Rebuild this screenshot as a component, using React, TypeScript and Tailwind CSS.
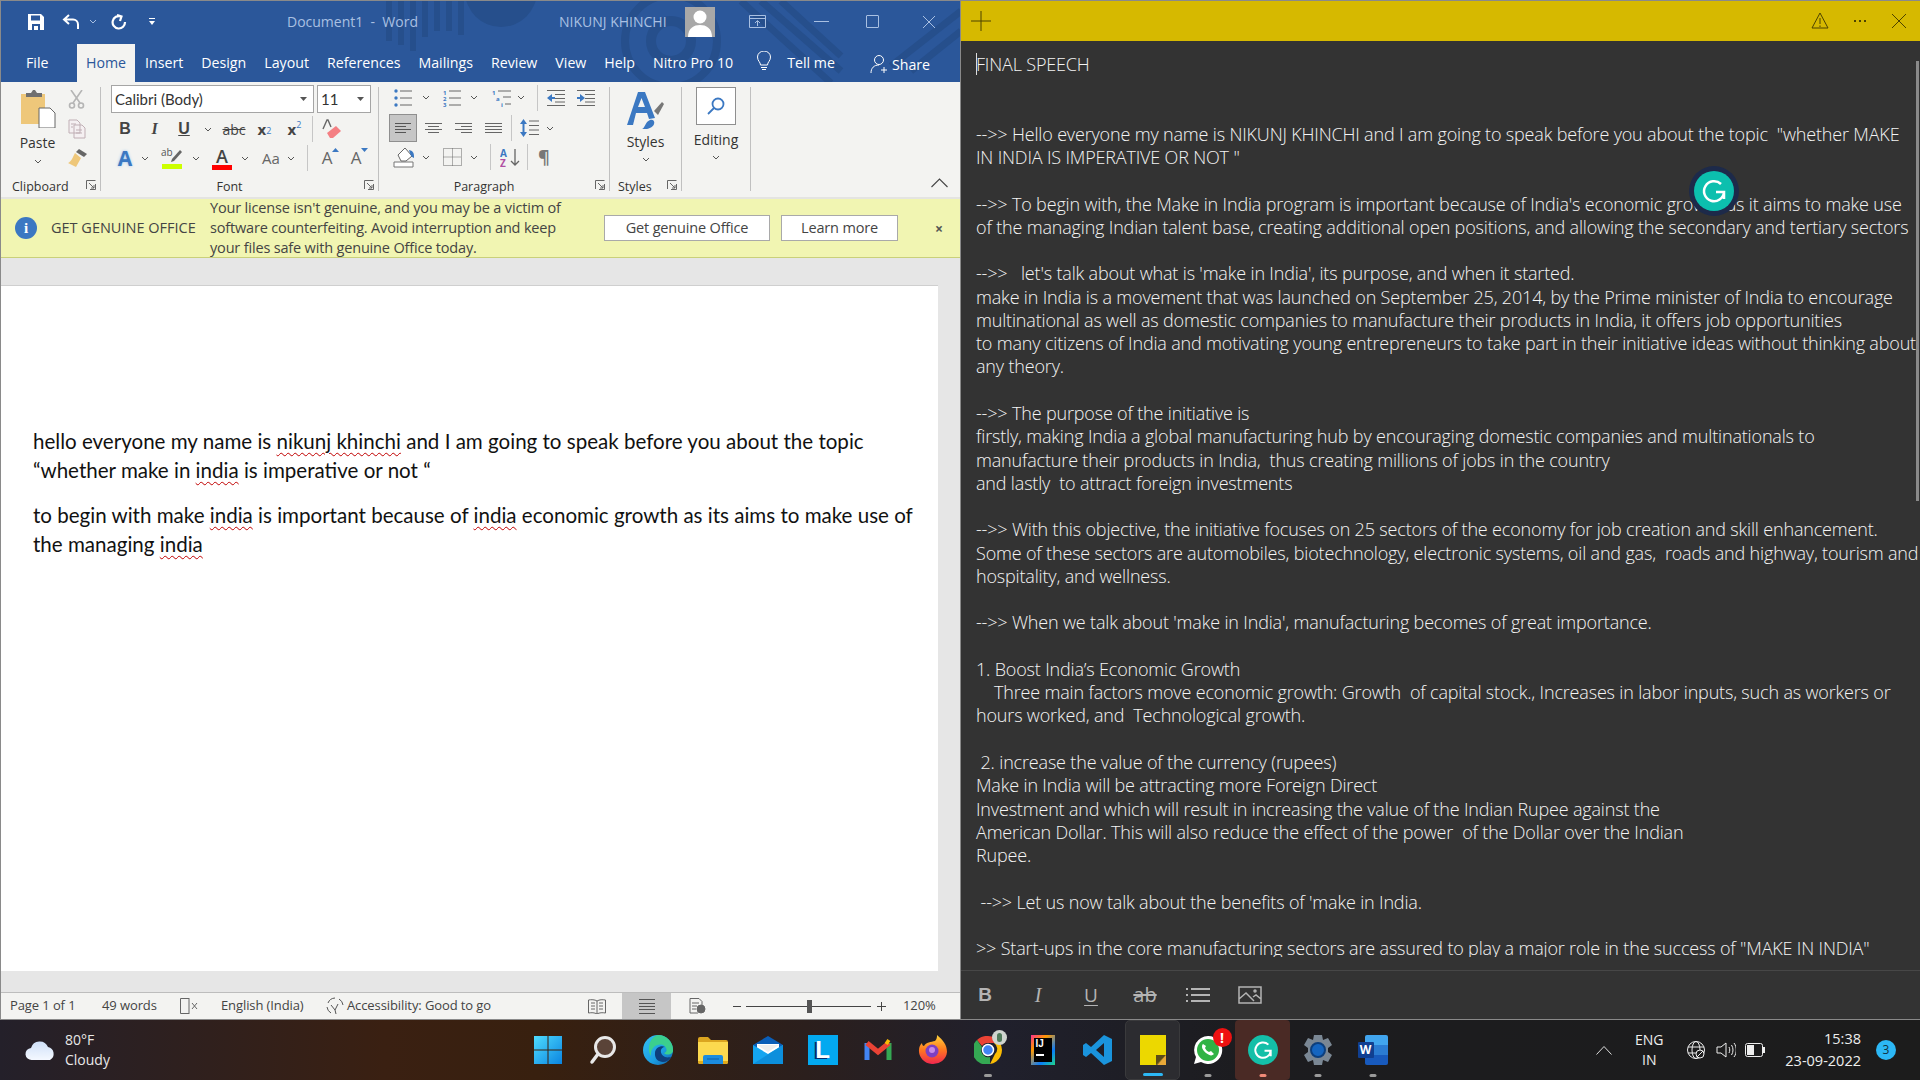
import React from "react";

const Chev = ({ c = "#555" }: { c?: string }) => (
  <svg width="8" height="5" viewBox="0 0 8 5"><path d="M1 1l3 3 3-3" fill="none" stroke={c} strokeWidth="1" /></svg>
);
const Launcher = () => (
  <svg width="10" height="10" viewBox="0 0 10 10" fill="none" stroke="#666"><path d="M.5 9V.5H9.5M9.5 4v5.5H4M3 3l5 5M8 5v3H5" /></svg>
);
const Sep = ({ className = "" }: { className?: string }) => <div className={"w-px h-[26px] bg-[#c6c6c6] " + className} />;
const Cell = ({ className = "", children }: { className?: string; children?: React.ReactNode }) => (
  <div className={"flex items-center justify-center shrink-0 " + className}>{children}</div>
);
const Lines = ({ rows, w = 18, h = 16, c = "#666" }: { rows: [number, number, number][]; w?: number; h?: number; c?: string }) => (
  <svg width={w} height={h} viewBox={`0 0 ${w} ${h}`} stroke={c} strokeWidth="1">
    {rows.map((r, i) => <line key={i} x1={r[0]} x2={r[1]} y1={r[2] + 0.5} y2={r[2] + 0.5} />)}
  </svg>
);
const Group = ({ className, label, launcher, children, labelClass = "" }: { className: string; label: string; launcher?: boolean; children: React.ReactNode; labelClass?: string }) => (
  <div className={"relative h-full shrink-0 flex flex-col " + className}>
    <div className="h-[91px] shrink-0">{children}</div>
    <div className={"flex-1 flex items-center justify-center text-[12.5px] text-[#333] pt-[4px] " + labelClass}>{label}</div>
    {launcher && <div className="absolute right-[4px] bottom-[7px]"><Launcher /></div>}
  </div>
);
const Divider = () => <div className="w-px h-[104px] bg-[#c0c0c0] shrink-0 mt-[5px]" />;

const Tabs = ["Insert", "Design", "Layout", "References", "Mailings", "Review", "View", "Help", "Nitro Pro 10"];

function TitleBar() {
  return (
    <div className="relative h-[81px] bg-[#2b579a] shrink-0 overflow-hidden font-['Open_Sans',sans-serif]">
      <svg className="absolute left-[380px] top-0" width="580" height="82" viewBox="0 0 580 82" fill="none" stroke="#264f8c">
        <g strokeWidth="6"><path d="M8 0v40M20 0v44M32 0v50M44 0v36M56 0v30M68 0v30M80 0v34" /></g>
        <circle cx="290" cy="40" r="20" strokeWidth="10" />
        <circle cx="290" cy="40" r="46" strokeWidth="8" />
        <path d="M360 0l90 82M380 0l80 70M400 0l60 55" strokeWidth="7" />
        <path d="M580 10l-70 55M580 30l-50 40" strokeWidth="7" />
        <circle cx="120" cy="-10" r="36" fill="#264f8c" stroke="none" />
      </svg>
      <div className="relative flex items-center h-[41px] text-white">
        <svg className="ml-[27px]" width="16" height="16" viewBox="0 0 16 16"><path d="M0 0h13l3 3v13H0z" fill="#fff" /><path d="M3 1.5h9v5H3z" fill="#2b579a" /><path d="M4 10h8v6h-2v-4H6v4H4z" fill="#2b579a" /></svg>
        <svg className="ml-[18px]" width="18" height="16" viewBox="0 0 18 16" fill="none" stroke="#fff" strokeWidth="2"><path d="M7 1L2 5.5 7 10M2 5.5h9a5 5 0 0 1 5 5V15" /></svg>
        <div className="ml-[9px]"><Chev c="#a9c0e2" /></div>
        <svg className="ml-[14px]" width="16" height="16" viewBox="0 0 16 16" fill="none" stroke="#fff" strokeWidth="2.2"><path d="M10 2.5A6.2 6.2 0 1 0 14 8M6 1l4.5 1.5L9 7" /></svg>
        <svg className="ml-[22px]" width="6" height="7" viewBox="0 0 6 7" fill="#fff"><path d="M0 0h6v1H0zM0 3h6L3 7z" /></svg>
        <div className="ml-[132px] text-[14px] text-[#a9c0e2] whitespace-pre w-[272px]">Document1  -  Word</div>
        <div className="text-[14px] text-[#a9c0e2] w-[126px] whitespace-nowrap">NIKUNJ KHINCHI</div>
        <div className="w-[30px] h-[30px] bg-[#a8a8a8] overflow-hidden">
          <svg width="30" height="30" viewBox="0 0 30 30" fill="#fff"><circle cx="15" cy="10" r="6.5" /><path d="M3 30c0-9 6-12 12-12s12 3 12 12z" /></svg>
        </div>
        <svg className="ml-[34px]" width="17" height="13" viewBox="0 0 17 13" fill="none" stroke="#a9c0e2"><path d="M.5.5h16v12H.5zM.5 3.5h16M8.5 11V6M6 8l2.5-2.5L11 8" /></svg>
        <div className="ml-[48px] w-[15px] h-px bg-[#a9c0e2]" />
        <div className="ml-[37px] w-[13px] h-[13px] border border-[#a9c0e2] rounded-[1px]" />
        <svg className="ml-[43px]" width="14" height="14" viewBox="0 0 14 14" stroke="#a9c0e2"><path d="M1 1l12 12M13 1L1 13" /></svg>
      </div>
      <div className="relative flex items-end h-[40px] text-white text-[14.2px] leading-[38px]">
        <div className="ml-[25px] w-[23px]">File</div>
        <div className="ml-[28px] w-[58px] h-[38px] bg-[#f3f3f1] text-[#2b579a] text-center">Home</div>
        <div className="ml-[10px] flex gap-[18px] whitespace-nowrap">{Tabs.map(t => <span key={t}>{t}</span>)}</div>
        <svg className="ml-[23px] mb-[9px]" width="16" height="22" viewBox="0 0 16 22" fill="none" stroke="#fff"><path d="M4.5 14c0-3-3-4-3-8a6.5 6 0 0 1 13 0c0 4-3 5-3 8zM5 16.5h6M6 18.5h4" /></svg>
        <span className="ml-[15px]">Tell me</span>
        <svg className="ml-[35px] mb-[8px]" width="20" height="20" viewBox="0 0 20 20" fill="none" stroke="#fff"><circle cx="9" cy="6" r="4.5" /><path d="M1 19c0-5 3-8 8-8M14 13v6M11 16h6" /></svg>
        <span className="ml-[2px] relative top-[2px]">Share</span>
      </div>
    </div>
  );
}

function Ribbon() {
  const blue = "#3b78c2";
  return (
    <div className="relative h-[115px] bg-[#f3f3f1] shrink-0 flex font-['Open_Sans',sans-serif] text-[#444]">
      <Group className="w-[99px]" label="Clipboard" launcher labelClass="justify-start pl-[11px]">
        <div className="flex">
          <div className="w-[67px] flex flex-col items-center pt-[8px] pl-[6px]">
            <svg width="36" height="38" viewBox="0 0 36 38"><path d="M1 4h24v30H1z" fill="#eec77a" /><path d="M6 3h5l2-3h2l2 3h5v4H6z" fill="#707070" /><path d="M19 18h11l5 5v15H19z" fill="#fff" stroke="#666" /></svg>
            <div className="text-[14px] leading-[20px] mt-[5px] text-[#333]">Paste</div>
            <div className="mt-[6px] leading-none"><Chev /></div>
          </div>
          <div className="flex flex-col items-start">
            <svg className="mt-[8px]" width="17" height="19" viewBox="0 0 17 19" fill="none" stroke="#b5b5b5" strokeWidth="1.6"><path d="M3 0l9 13M14 0L5 13" /><circle cx="4" cy="15.5" r="2.5" /><circle cx="13" cy="15.5" r="2.5" /></svg>
            <svg className="mt-[10px]" width="18" height="20" viewBox="0 0 18 20" fill="#f5f0f2" stroke="#c0afb5"><path d="M1 1h8l3 3v10H1zM6 6h8l3 3v10H6zM3 5h5M3 8h2M8 11h6M8 14h6" /></svg>
            <svg className="mt-[10px]" width="19" height="18" viewBox="0 0 19 18"><path d="M11 0l8 5-3 3-8-5z" fill="#666" /><path d="M7 4l6 5-5 9-8-4c3-1 5-6 7-10z" fill="#eec77a" /></svg>
          </div>
        </div>
      </Group>
      <Divider />
      <Group className="w-[277px]" label="Font" launcher labelClass="pr-[20px]">
        <div className="pl-[10px] pt-[3px] flex flex-col">
          <div className="flex h-[28px] gap-[3px]">
            <div className="w-[203px] bg-white border border-[#a5a5a5] flex items-center justify-between px-[3px] pr-[6px] font-['Lato',sans-serif] text-[15px] text-[#333]">Calibri (Body)<svg width="7" height="4" viewBox="0 0 7 4" fill="#555"><path d="M0 0h7L3.5 4z" /></svg></div>
            <div className="w-[54px] bg-white border border-[#a5a5a5] flex items-center justify-between px-[3px] pr-[6px] font-['Lato',sans-serif] text-[15px] text-[#333]">11<svg width="7" height="4" viewBox="0 0 7 4" fill="#555"><path d="M0 0h7L3.5 4z" /></svg></div>
          </div>
          <div className="flex h-[26px] mt-[3px] items-center">
            <Cell className="w-[28px] font-bold text-[16px] font-['Liberation_Sans',sans-serif]">B</Cell>
            <Cell className="w-[31px] italic font-bold text-[16px] font-['Liberation_Serif',serif]">I</Cell>
            <Cell className="w-[28px] font-bold text-[16px] underline font-['Liberation_Sans',sans-serif]">U</Cell>
            <Cell className="w-[20px]"><Chev /></Cell>
            <Cell className="w-[32px] text-[14px] line-through">abc</Cell>
            <Cell className="w-[29px] font-bold text-[15px]">x<sub className="text-[9px] font-normal text-[#3b78c2]">2</sub></Cell>
            <Cell className="w-[31px] font-bold text-[15px]">x<sup className="text-[9px] font-normal text-[#3b78c2]">2</sup></Cell>
            <Sep className="ml-[2px]" />
            <Cell className="w-[38px]">
              <svg width="20" height="20" viewBox="0 0 20 20"><path d="M1 10L5 1h1l3 7" fill="none" stroke="#666" strokeWidth="1.4" /><path d="M5 14l9-7 5 5-8 7H8z" fill="#f47f83" /></svg>
            </Cell>
          </div>
          <div className="flex h-[26px] mt-[3px] items-center">
            <Cell className="w-[28px] text-[21px] font-bold text-[#3b78c2] leading-none [text-shadow:0_0_3px_#9cc3ee]">A</Cell>
            <Cell className="w-[12px]"><Chev /></Cell>
            <div className="ml-[8px] w-[26px] flex flex-col items-center">
              <svg width="22" height="17" viewBox="0 0 22 17"><path d="M11 12l8-9 2 2-8 9-3 1z" fill="#666" /><text x="0" y="9" fontSize="10" fill="#555" fontFamily="Open Sans">ab</text></svg>
              <div className="w-[20px] h-[5px] bg-[#ccff00]" />
            </div>
            <Cell className="ml-[5px] w-[12px]"><Chev /></Cell>
            <div className="ml-[7px] w-[26px] flex flex-col items-center leading-none">
              <span className="text-[18px] leading-[18px] font-semibold text-[#444]">A</span>
              <div className="w-[20px] h-[5px] bg-[#f00]" />
            </div>
            <Cell className="ml-[4px] w-[12px]"><Chev /></Cell>
            <Cell className="ml-[6px] w-[28px] text-[15px] text-[#666]">Aa</Cell>
            <Cell className="w-[12px]"><Chev /></Cell>
            <Sep className="ml-[10px]" />
            <Cell className="ml-[5px] w-[28px] text-[17px] text-[#666] relative">A<svg className="absolute right-[2px] top-[3px]" width="7" height="4" viewBox="0 0 7 4" fill={blue}><path d="M3.5 0L7 4H0z" /></svg></Cell>
            <Cell className="ml-px w-[28px] text-[17px] text-[#666] relative">A<svg className="absolute right-[2px] top-[3px]" width="7" height="4" viewBox="0 0 7 4" fill={blue}><path d="M0 0h7L3.5 4z" /></svg></Cell>
          </div>
        </div>
      </Group>
      <Divider />
      <Group className="w-[230px]" label="Paragraph" launcher labelClass="pr-[20px]">
        <div className="flex h-[29px] items-center pt-[2px]">
          <svg className="ml-[15px]" width="18" height="18" viewBox="0 0 18 18"><g fill={blue}><circle cx="2" cy="2" r="1.7" /><circle cx="2" cy="9" r="1.7" /><circle cx="2" cy="16" r="1.7" /></g><path d="M6 2h12M6 9h12M6 16h12" stroke="#666" /></svg>
          <Cell className="ml-[8px] w-[12px]"><Chev /></Cell>
          <svg className="ml-[11px]" width="18" height="18" viewBox="0 0 18 18"><text x="0" y="5.500" fontSize="6" fontWeight="700" fill={blue}>1</text><text x="0" y="11.5" fontSize="6" fontWeight="700" fill={blue}>2</text><text x="0" y="17.500" fontSize="6" fontWeight="700" fill={blue}>3</text><path d="M6 2h12M6 9h12M6 16h12" stroke="#666" /></svg>
          <Cell className="ml-[7px] w-[12px]"><Chev /></Cell>
          <svg className="ml-[12px]" width="19" height="18" viewBox="0 0 19 18"><text x="0" y="6" fontSize="6" fontWeight="700" fill={blue}>1</text><text x="4" y="12" fontSize="6" fontWeight="700" fill={blue}>a</text><text x="9" y="17.500" fontSize="6" fontWeight="700" fill={blue}>i</text><path d="M6 2h13M11 8h8M13 15h6" stroke="#666" /></svg>
          <Cell className="ml-[4px] w-[12px]"><Chev /></Cell>
          <Sep className="ml-[10px]" />
          <svg className="ml-[9px]" width="18" height="16" viewBox="0 0 18 16"><path d="M0 .5h18M8 4.5h10M8 8.5h10M8 12h10M0 15.5h18" stroke="#666" /><path d="M0 8l5-4v3h3v2H5v3z" fill={blue} /></svg>
          <svg className="ml-[12px]" width="18" height="16" viewBox="0 0 18 16"><path d="M0 .5h18M8 4.5h10M8 8.5h10M8 12h10M0 15.5h18" stroke="#666" /><path d="M8 8L3 4v3H0v2h3v3z" fill={blue} /></svg>
        </div>
        <div className="flex h-[28px] mt-[3px] items-center">
          <Cell className="ml-[10px] w-[28px] h-[28px] bg-[#c6c6c6] border border-[#8f8f8f]"><Lines w={16} h={13} rows={[[0, 16, 1], [0, 11, 4], [0, 16, 7], [0, 11, 10]]} c="#555" /></Cell>
          <Cell className="ml-[7px] w-[18px]"><Lines w={17} h={13} rows={[[0, 17, 1], [3, 14, 4], [0, 17, 7], [3, 14, 10]]} /></Cell>
          <Cell className="ml-[12px] w-[18px]"><Lines w={17} h={13} rows={[[0, 17, 1], [6, 17, 4], [0, 17, 7], [6, 17, 10]]} /></Cell>
          <Cell className="ml-[12px] w-[18px]"><Lines w={17} h={13} rows={[[0, 17, 1], [0, 17, 4], [0, 17, 7], [0, 17, 10]]} /></Cell>
          <Sep className="ml-[9px]" />
          <svg className="ml-[8px]" width="19" height="20" viewBox="0 0 19 20"><path d="M3.5 1L7 6H0zM3.5 19L0 14h7z" fill={blue} /><path d="M2.5 5h2v10h-2z" fill={blue} /><path d="M9 3h10M9 7.500h10M9 12h10M9 16.500h10" stroke="#666" /></svg>
          <Cell className="ml-[5px] w-[12px]"><Chev /></Cell>
        </div>
        <div className="flex h-[28px] mt-px items-center">
          <svg className="ml-[14px]" width="26" height="21" viewBox="0 0 26 21"><path d="M1 15h19v5H1z" fill="#fff" stroke="#777" /><path d="M5 8l7-7 7 8-6 5H8z" fill="#fff" stroke="#666" /><path d="M16 3c5 1 5 4 5 8-3-1-4-4-5-8z" fill={blue} /></svg>
          <Cell className="ml-px w-[12px]"><Chev /></Cell>
          <svg className="ml-[11px]" width="19" height="18" viewBox="0 0 19 18" fill="none" stroke="#666" strokeDasharray="1 1"><path d="M.5.5h18v17H.5zM9.500.5v17M.5 9h18" /></svg>
          <Cell className="ml-[6px] w-[12px]"><Chev /></Cell>
          <Sep className="ml-[10px]" />
          <svg className="ml-[9px]" width="20" height="21" viewBox="0 0 20 21"><text x="0" y="10" fontSize="10" fontWeight="700" fill={blue}>A</text><text x="0" y="20" fontSize="10" fontWeight="700" fill="#b04fa3">Z</text><path d="M15 2v16M11 14l4 4 4-4" fill="none" stroke="#666" strokeWidth="1.3" /></svg>
          <Sep className="ml-[7px]" />
          <Cell className="ml-[9px] w-[14px] text-[18px] text-[#777] font-bold">¶</Cell>
        </div>
      </Group>
      <Divider />
      <Group className="w-[71px]" label="Styles" launcher labelClass="justify-start pl-[8px]">
        <div className="flex flex-col items-center pt-[9px]">
          <svg width="38" height="38" viewBox="0 0 38 38"><path d="M0 34L11 1h7l10 26-6 1-2-6H9l-3 12zM11 16h7l-3.500-9z" fill={blue} fillRule="evenodd" /><path d="M27 20l8-9 2 2-6 11z" fill="#777" /><path d="M15 38c3-1 3-7 8-9 3-1 5 1 4 4-1 4-8 6-12 5z" fill={blue} /></svg>
          <div className="text-[14px] leading-[20px] mt-[3px] text-[#333]">Styles</div>
          <div className="leading-none mt-[5px]"><Chev /></div>
        </div>
      </Group>
      <Divider />
      <Group className="w-[68px]" label="">
        <div className="flex flex-col items-center pt-[5px]">
          <div className="w-[40px] h-[38px] bg-white border border-[#8f8f8f] flex items-center justify-center">
            <svg width="18" height="18" viewBox="0 0 18 18" fill="none" stroke={blue} strokeWidth="1.8"><circle cx="11" cy="7" r="5.500" /><path d="M7 11l-6 6" /></svg>
          </div>
          <div className="text-[14px] leading-[20px] mt-[5px] text-[#333]">Editing</div>
          <div className="leading-none mt-[5px]"><Chev /></div>
        </div>
      </Group>
      <Divider />
      <div className="ml-auto mr-[12px] mt-[96px]">
        <svg width="17" height="10" viewBox="0 0 17 10" fill="none" stroke="#444" strokeWidth="1.100"><path d="M.5 9l8-8 8 8" /></svg>
      </div>
    </div>
  );
}

function Banner() {
  return (
    <div className="h-[61px] shrink-0 bg-[#f1f5b2] border-t-[2px] border-t-[#e4e4e1] border-b border-b-[#c9d07a] flex items-center font-['Open_Sans',sans-serif] text-[#444]">
      <div className="ml-[14px] w-[22px] h-[22px] rounded-full bg-[#3b78c2] text-white flex items-center justify-center font-bold text-[15px] font-['Liberation_Serif',serif]">i</div>
      <div className="ml-[14px] w-[159px] text-[14.5px] whitespace-nowrap">GET GENUINE OFFICE</div>
      <div className="w-[394px] text-[14.5px] leading-[19.7px] tracking-[-0.17px] whitespace-nowrap">
        <div>Your license isn't genuine, and you may be a victim of</div>
        <div>software counterfeiting. Avoid interruption and keep</div>
        <div>your files safe with genuine Office today.</div>
      </div>
      <div className="w-[166px] h-[26px] bg-white border border-[#a9a9a9] flex items-center justify-center text-[14.5px] tracking-[-0.17px]">Get genuine Office</div>
      <div className="ml-[11px] w-[117px] h-[26px] bg-white border border-[#a9a9a9] flex items-center justify-center text-[14.5px] tracking-[-0.17px]">Learn more</div>
      <div className="ml-[37px] font-bold text-[14px] text-[#555]">×</div>
    </div>
  );
}

const Sq = ({ children }: { children: React.ReactNode }) => (
  <span className="underline decoration-wavy decoration-[#c00000] decoration-1 underline-offset-[3px]">{children}</span>
);

function StatusBar() {
  return (
    <div className="h-[27px] shrink-0 bg-[#f3f3f1] border-t border-[#bdbdbd] flex items-center text-[13px] text-[#444] font-['Open_Sans',sans-serif] whitespace-nowrap tracking-[-0.1px]">
      <span className="ml-[9px] w-[92px]">Page 1 of 1</span>
      <span className="w-[78px]">49 words</span>
      <svg width="18" height="16" viewBox="0 0 18 16" fill="none" stroke="#666"><path d="M9 .5H.5v15H9M9 0v16M12 5l5 6M17 5l-5 6" /></svg>
      <span className="ml-[23px] w-[105px]">English (India)</span>
      <svg width="18" height="18" viewBox="0 0 18 18" fill="none" stroke="#555"><path d="M9 1a8 8 0 0 0-7 5M1 10a8 8 0 0 0 4 6M17 8a8 8 0 0 0-4-6M5 8l4 5 3-6M9 13l1 4" /></svg>
      <span className="ml-[3px] w-[241px]">Accessibility: Good to go</span>
      <svg width="18" height="15" viewBox="0 0 18 15" fill="none" stroke="#666"><path d="M9 2C7 .5 3 .5 .5 1v13c3-.5 6-.5 8.500 1 2.500-1.500 5.500-1.500 8.500-1V1c-3-.5-6-.5-8.500 1zM9 2v13M3 4h4M3 7h4M3 10h4M11 4h4M11 7h4M11 10h4" /></svg>
      <div className="ml-[16px] w-[49px] h-[26px] bg-[#c6c6c6] flex items-center justify-center">
        <Lines w={16} h={15} rows={[[0, 16, 0], [0, 16, 4], [0, 16, 7], [0, 16, 10], [0, 16, 14]]} c="#555" />
      </div>
      <svg className="ml-[18px]" width="17" height="16" viewBox="0 0 17 16" fill="none" stroke="#666"><path d="M9 15H1V.5h9l3 3V7M3 5h7M3 8h5M3 11h4" /><circle cx="12" cy="11" r="4" fill="#666" /></svg>
      <div className="ml-[27px] w-[8px] h-px bg-[#444]" />
      <div className="ml-[5px] relative w-[125px] h-px bg-[#444]">
        <div className="absolute left-[61px] top-[-6px] w-[5px] h-[13px] bg-[#555]" />
      </div>
      <div className="ml-[6px] relative w-[9px] h-[9px] before:absolute before:left-0 before:top-[4px] before:w-[9px] before:h-px before:bg-[#444] after:absolute after:left-[4px] after:top-0 after:w-px after:h-[9px] after:bg-[#444]" />
      <span className="ml-[17px]">120%</span>
    </div>
  );
}

function Word() {
  return (
    <div className="w-[960px] h-[1020px] shrink-0 flex flex-col border-t border-l border-[#8a8a8a] border-b bg-[#e6e6e6]">
      <TitleBar />
      <Ribbon />
      <Banner />
      <div className="flex-1 min-h-0 pt-[27px] flex flex-col">
        <div className="w-[937px] h-[686px] bg-white pl-[32px] pt-[141px] font-['Lato',sans-serif] text-[20.55px] leading-[29.4px] text-[#111] border-t border-[#cfcfcf]">
          <p className="whitespace-nowrap">hello everyone my name is <Sq>nikunj khinchi</Sq> and I am going to speak before you about the topic</p>
          <p className="whitespace-nowrap">“whether make in <Sq>india</Sq> is imperative or not “</p>
          <p className="whitespace-nowrap mt-[15px]">to begin with make <Sq>india</Sq> is important because of <Sq>india</Sq> economic growth as its aims to make use of</p>
          <p className="whitespace-nowrap">the managing <Sq>india</Sq></p>
        </div>
      </div>
      <StatusBar />
    </div>
  );
}

const NOTE = [
  "FINAL SPEECH", "", "",
  `-->> Hello everyone my name is NIKUNJ KHINCHI and I am going to speak before you about the topic  "whether MAKE`,
  `IN INDIA IS IMPERATIVE OR NOT "`, "",
  "-->> To begin with, the Make in India program is important because of India's economic growth as it aims to make use",
  "of the managing Indian talent base, creating additional open positions, and allowing the secondary and tertiary sectors", "",
  "-->>   let's talk about what is 'make in India', its purpose, and when it started.",
  "make in India is a movement that was launched on September 25, 2014, by the Prime minister of India to encourage",
  "multinational as well as domestic companies to manufacture their products in India, it offers job opportunities",
  "to many citizens of India and motivating young entrepreneurs to take part in their initiative ideas without thinking about",
  "any theory.", "",
  "-->> The purpose of the initiative is",
  "firstly, making India a global manufacturing hub by encouraging domestic companies and multinationals to",
  "manufacture their products in India,  thus creating millions of jobs in the country",
  "and lastly  to attract foreign investments", "",
  "-->> With this objective, the initiative focuses on 25 sectors of the economy for job creation and skill enhancement.",
  "Some of these sectors are automobiles, biotechnology, electronic systems, oil and gas,  roads and highway, tourism and",
  "hospitality, and wellness.", "",
  "-->> When we talk about 'make in India', manufacturing becomes of great importance.", "",
  "1. Boost India’s Economic Growth",
  "    Three main factors move economic growth: Growth  of capital stock., Increases in labor inputs, such as workers or",
  "hours worked, and  Technological growth.", "",
  " 2. increase the value of the currency (rupees)",
  "Make in India will be attracting more Foreign Direct",
  "Investment and which will result in increasing the value of the Indian Rupee against the",
  "American Dollar. This will also reduce the effect of the power  of the Dollar over the Indian",
  "Rupee.", "",
  " -->> Let us now talk about the benefits of 'make in India.", "",
  `>> Start-ups in the core manufacturing sectors are assured to play a major role in the success of "MAKE IN INDIA"`,
];

function Sticky() {
  return (
    <div className="relative flex-1 h-[1020px] flex flex-col border-t border-l border-[#8a8a8a] border-b bg-[#333] font-['Open_Sans',sans-serif]">
      <div className="h-[40px] shrink-0 bg-[#d6b900] flex items-center">
        <svg className="ml-[10px]" width="20" height="20" viewBox="0 0 20 20" stroke="#4d4300"><path d="M10 0v20M0 10h20" /></svg>
        <svg className="ml-auto" width="18" height="18" viewBox="0 0 18 18" fill="none" stroke="#4d4300"><path d="M9 1l8 15H1zM9 6v6M9 13.500v1.500" /></svg>
        <div className="ml-[25px] flex gap-[3px]"><i className="w-[2px] h-[2px] bg-[#4d4300]" /><i className="w-[2px] h-[2px] bg-[#4d4300]" /><i className="w-[2px] h-[2px] bg-[#4d4300]" /></div>
        <svg className="ml-[25px] mr-[13px]" width="16" height="16" viewBox="0 0 16 16" stroke="#4d4300"><path d="M1 1l14 14M15 1L1 15" /></svg>
      </div>
      <div className="relative h-[916px] shrink-0 overflow-hidden pl-[15px] pt-[12px] text-[18px] leading-[23.27px] tracking-[-0.17px] font-light text-[#f4f4f4] whitespace-pre">
        <div className="absolute left-[15px] top-[12px] w-px h-[22px] bg-[#ddd]" />
        {NOTE.map((l, i) => <div key={i} className="h-[23.27px]">{l}</div>)}
        <div className="absolute right-[1px] top-[20px] w-[3px] h-[440px] bg-[#8a8a8a]" />
      </div>
      <div className="h-[13px] shrink-0" />
      <div className="flex-1 border-t border-[#474747] flex items-center text-[#b4b4b4]">
        <Cell className="ml-[16px] w-[16px] text-[19px] font-bold font-['Liberation_Sans',sans-serif]">B</Cell>
        <Cell className="ml-[37px] w-[16px] text-[20px] italic font-['Liberation_Serif',serif]">I</Cell>
        <Cell className="ml-[37px] w-[16px] text-[19px] underline underline-offset-[3px]">U</Cell>
        <Cell className="ml-[34px] w-[24px] text-[20px] line-through">ab</Cell>
        <svg className="ml-[29px]" width="24" height="16" viewBox="0 0 24 16" stroke="#b4b4b4" strokeWidth="2"><path d="M0 2h2M5 2h19M0 8h2M5 8h19M0 14h2M5 14h19" /></svg>
        <svg className="ml-[28px]" width="24" height="18" viewBox="0 0 24 18" fill="none" stroke="#b4b4b4" strokeWidth="1.500"><path d="M1 1h22v16H1zM1 13l7-6 8 8M15 11l3-2 5 4" /><circle cx="17" cy="5" r="1" /></svg>
      </div>
      <div className="absolute left-[728px] top-[165px] w-[50px] h-[50px] rounded-full bg-[#1d2a4a] flex items-center justify-center">
        <div className="w-[40px] h-[40px] rounded-full bg-[#0cbfae] flex items-center justify-center">
          <svg width="26" height="26" viewBox="0 0 26 26" fill="none" stroke="#fff" strokeWidth="2.500"><path d="M20 6a10 10 0 1 0 3 8h-8M23 21v-7" /></svg>
        </div>
      </div>
    </div>
  );
}

const Slot = ({ children, dot, className = "" }: { children: React.ReactNode; dot?: string; className?: string }) => (
  <div className={"relative w-[55px] h-[60px] flex items-center justify-center shrink-0 " + className}>
    {children}
    {dot && <div className={"absolute bottom-[3px] left-1/2 -translate-x-1/2 h-[3px] rounded-full " + dot} />}
  </div>
);

function Taskbar() {
  return (
    <div className="relative h-[60px] shrink-0 flex items-center text-white font-['Open_Sans',sans-serif] bg-[linear-gradient(90deg,#24202a_0%,#3a2012_20%,#38200f_28%,#2b1f1d_42%,#20202c_52%,#1c1c1f_65%,#1c1c1c_100%)]">
      <div className="w-[520px] shrink-0 flex items-center">
        <svg className="ml-[25px]" width="32" height="22" viewBox="0 0 32 22"><defs><linearGradient id="cl" x1="0" y1="0" x2="0" y2="1"><stop offset="0" stopColor="#cfe0f8" /><stop offset="1" stopColor="#f4f8ff" /></linearGradient></defs><path d="M7 21a6 6 0 0 1-1-12 9 9 0 0 1 17-1 7 7 0 0 1 2 13z" fill="url(#cl)" /></svg>
        <div className="ml-[8px] text-[14px] leading-[20px] text-[#e8e8e8]"><div>80°F</div><div>Cloudy</div></div>
      </div>
      <div className="flex items-center h-full">
        <Slot><svg width="30" height="30" viewBox="0 0 30 30"><defs><linearGradient id="w" x1="0" y1="0" x2="1" y2="1"><stop offset="0" stopColor="#4fdcff" /><stop offset="1" stopColor="#0a84e0" /></linearGradient></defs><path d="M1 1h13.500v13.500H1zM15.500 1H29v13.500H15.500zM1 15.500h13.500V29H1zM15.500 15.500H29V29H15.500z" fill="url(#w)" /></svg></Slot>
        <Slot><svg width="28" height="30" viewBox="0 0 28 30" fill="none"><circle cx="16" cy="12" r="9.500" fill="#5a4338" stroke="#e8e8e8" strokeWidth="3" /><path d="M9 19l-6 8" stroke="#e8e8e8" strokeWidth="3.500" strokeLinecap="round" /></svg></Slot>
        <Slot><svg width="30" height="30" viewBox="0 0 30 30"><defs><linearGradient id="e" x1="0" y1="0" x2="1" y2="1"><stop offset="0" stopColor="#35c1f1" /><stop offset=".6" stopColor="#1b9de2" /><stop offset="1" stopColor="#0f5fa8" /></linearGradient></defs><circle cx="15" cy="15" r="15" fill="url(#e)" /><path d="M15 0a15 15 0 0 1 15 16c0 3-6 5-9 2 4-1 3-6-1-8-6-2-13 3-12 11C3 14 7 2 15 0z" fill="#3bcf8e" /><path d="M12 18c0-5 6-8 10-6-5 0-6 7 0 10 3 1 5 0 6 0-4 8-17 6-16-4z" fill="#0e3f7c" /></svg></Slot>
        <Slot><svg width="30" height="27" viewBox="0 0 30 27"><path d="M0 2a2 2 0 0 1 2-2h8l3 3h15a2 2 0 0 1 2 2v3H0z" fill="#dba520" /><path d="M0 5h30v20a2 2 0 0 1-2 2H2a2 2 0 0 1-2-2z" fill="#fcd94f" /><path d="M0 24h30v1a2 2 0 0 1-2 2H2a2 2 0 0 1-2-2z" fill="#e0a91a" /><path d="M5 20a2 2 0 0 1 2-2h16a2 2 0 0 1 2 2v7H5z" fill="#1b8ce0" /><path d="M9 22h12" stroke="#0f5fa8" /></svg></Slot>
        <Slot><svg width="30" height="28" viewBox="0 0 30 28"><path d="M15 0l15 9v19H0V9z" fill="#0a5eb8" /><path d="M4 8h22v9L15 23 4 17z" fill="#fff" /><path d="M0 9l15 9 15-9v19H0z" fill="#14a5f0" /><path d="M0 28L30 9v19z" fill="#0c8fdc" /><path d="M4 9h22L15 16z" fill="#eee" /></svg></Slot>
        <Slot><div className="w-[30px] h-[30px] bg-[#03a9f0] flex items-center justify-center"><span className="relative text-white font-bold text-[24px] leading-none font-['Liberation_Sans',sans-serif] [text-shadow:-2px_1px_0_#0b2a6b]">L</span></div></Slot>
        <Slot><svg width="28" height="24" viewBox="0 0 28 24" fill="none" strokeWidth="5"><path d="M3 22V5" stroke="#4285f4" /><path d="M25 22V5" stroke="#34a853" /><path d="M3 5l11 9L25 5" stroke="#ea4335" /><path d="M25 5l-3-2" stroke="#fbbc04" /></svg></Slot>
        <Slot><svg width="29" height="30" viewBox="0 0 29 30"><defs><linearGradient id="f" x1="0" y1="0" x2="0" y2="1"><stop offset="0" stopColor="#ffd43a" /><stop offset=".5" stopColor="#ff7a1f" /><stop offset="1" stopColor="#f0264f" /></linearGradient></defs><path d="M19 0c6 5 10 10 10 17a14 13 0 1 1-28-2c0-3 1-5 3-7 0 2 1 3 2 3 2-4 7-4 11-5 2-2 2-4 2-6z" fill="url(#f)" /><circle cx="14" cy="16" r="6.500" fill="#7d3fc2" /><circle cx="14" cy="15" r="3" fill="#c78be8" /></svg></Slot>
        <Slot dot="w-[8px] bg-[#9a9a9a]"><div className="relative"><svg width="28" height="28" viewBox="0 0 28 28"><path d="M14 0a14 14 0 0 1 12 7H14a7 7 0 0 0-6 3L3 4a14 14 0 0 1 11-4z" fill="#ea4335" /><path d="M26 7a14 14 0 0 1-10 21l5-10a7 7 0 0 0-1-11z" fill="#fbbc04" /><path d="M16 28A14 14 0 0 1 3 4l5 7a7 7 0 0 0 8 10z" fill="#34a853" /><circle cx="14" cy="14" r="5.500" fill="#4285f4" stroke="#fff" strokeWidth="1.500" /></svg><div className="absolute -right-[5px] -top-[6px] w-[15px] h-[15px] rounded-full bg-[#cfd4cf] flex items-center justify-center"><div className="w-[5px] h-[9px] bg-[#4f7a5a] rounded-full" /></div></div></Slot>
        <Slot><div className="w-[24px] h-[30px] bg-[linear-gradient(135deg,#ff318c,#ff9a00_30%,#087cfa_70%,#21d789)] p-[3px]"><div className="w-full h-full bg-black text-white text-[10px] font-bold leading-[12px] pl-[2px] font-['Liberation_Sans',sans-serif]">IJ<div className="w-[8px] h-[2px] bg-white mt-[4px]" /></div></div></Slot>
        <Slot><svg width="30" height="30" viewBox="0 0 30 30"><path d="M21 0l8 4v22l-8 4-13-12-5 4-3-2v-10l3-2 5 4zM21 8l-8 7 8 7z" fill="#1a94dd" fillRule="evenodd" /></svg></Slot>
        <Slot dot="w-[20px] bg-[#2cb8f6]" className="bg-[#2c2c30] rounded-[5px] border border-[#3a3a3c]"><svg width="26" height="30" viewBox="0 0 26 30"><path d="M0 0h26v20l-10 10H0z" fill="#ecd800" /><path d="M26 20H16v10z" fill="#5a4b18" /><path d="M17 30l9-10v10z" fill="#e8a838" /></svg></Slot>
        <Slot dot="w-[7px] bg-[#9a9a9a]"><div className="relative"><svg width="30" height="30" viewBox="0 0 30 30"><path d="M15 1a14 14 0 0 0-12 21L1 29l7-2A14 14 0 1 0 15 1z" fill="#fff" /><circle cx="15" cy="15" r="11" fill="#2fb344" /><path d="M10 9c-2 2-1 6 3 9s6 3 8 1l-3-3-2 1c-2-1-3-2-4-4l1-2z" fill="#fff" /></svg><div className="absolute -right-[9px] -top-[7px] w-[19px] h-[19px] rounded-full bg-[#ee1111] text-white text-[14px] font-bold flex items-center justify-center">!</div></div></Slot>
        <Slot dot="w-[7px] bg-[#f08a78]" className="bg-[#4a2a25] rounded-[4px]"><div className="w-[30px] h-[30px] rounded-full bg-[#14bfa8] flex items-center justify-center"><svg width="20" height="20" viewBox="0 0 26 26" fill="none" stroke="#fff" strokeWidth="2.600"><path d="M20 6a10 10 0 1 0 3 8h-8M23 21v-7" /></svg></div></Slot>
        <Slot dot="w-[7px] bg-[#9a9a9a]"><svg width="30" height="30" viewBox="0 0 30 30"><path d="M11 0h8l1 5 5-2 4 7-4 3v4l4 3-4 7-5-2-1 5h-8l-1-5-5 2-4-7 4-3v-4L1 10l4-7 5 2z" fill="#7a8794" /><circle cx="15" cy="15" r="7" fill="#1565c0" stroke="#0d3f7d" strokeWidth="2" /></svg></Slot>
        <Slot dot="w-[7px] bg-[#9a9a9a]"><div className="relative w-[30px] h-[30px]"><div className="absolute right-0 top-0 w-[23px] h-[30px] rounded-[2px] bg-[linear-gradient(180deg,#41a5ee_0_33%,#2b7cd3_33%_66%,#185abd_66%_100%)]" /><div className="absolute left-0 top-[7px] w-[16px] h-[16px] rounded-[1px] bg-[#103f91] text-white text-[12px] font-bold flex items-center justify-center">W</div></div></Slot>
      </div>
      <div className="ml-[196px] flex items-center">
        <svg width="16" height="9" viewBox="0 0 16 9" fill="none" stroke="#ddd"><path d="M.5 8.500l7.500-8 7.500 8" /></svg>
      </div>
      <div className="ml-[23px] text-[14px] leading-[20px] text-center text-[#eee]"><div>ENG</div><div>IN</div></div>
      <svg className="ml-[22px]" width="20" height="20" viewBox="0 0 20 20" fill="none" stroke="#eee"><circle cx="10" cy="10" r="8.500" /><ellipse cx="10" cy="10" rx="4" ry="8.500" /><path d="M2 7h16M2 13h16" /><circle cx="14" cy="14" r="4" fill="#1c1c1c" /><path d="M11 17l6-6" /></svg>
      <svg className="ml-[10px]" width="20" height="18" viewBox="0 0 20 18" fill="none" stroke="#eee"><path d="M1 6h4l5-4v14l-5-4H1zM13 6c1 2 1 4 0 6M15.500 4c2 3 2 7 0 10M18 2c3 4 3 10 0 14" /></svg>
      <svg className="ml-[9px]" width="20" height="14" viewBox="0 0 20 14"><rect x=".5" y=".5" width="17" height="13" rx="2" fill="none" stroke="#eee" /><rect x="2" y="2" width="7" height="10" fill="#eee" /><rect x="18" y="4" width="2" height="6" fill="#eee" /></svg>
      <div className="ml-auto text-right text-[14.5px] leading-[22px] text-[#eee]"><div>15:38</div><div>23-09-2022</div></div>
      <div className="ml-[15px] mr-[24px] w-[20px] h-[20px] rounded-full bg-[#2cb8f6] text-[#103040] text-[12px] flex items-center justify-center">3</div>
    </div>
  );
}

export default function App() {
  return (
    <div className="w-[1920px] h-[1080px] overflow-hidden flex flex-col bg-[#1c1c1c]">
      <div className="flex h-[1020px] shrink-0">
        <Word />
        <Sticky />
      </div>
      <Taskbar />
    </div>
  );
}
